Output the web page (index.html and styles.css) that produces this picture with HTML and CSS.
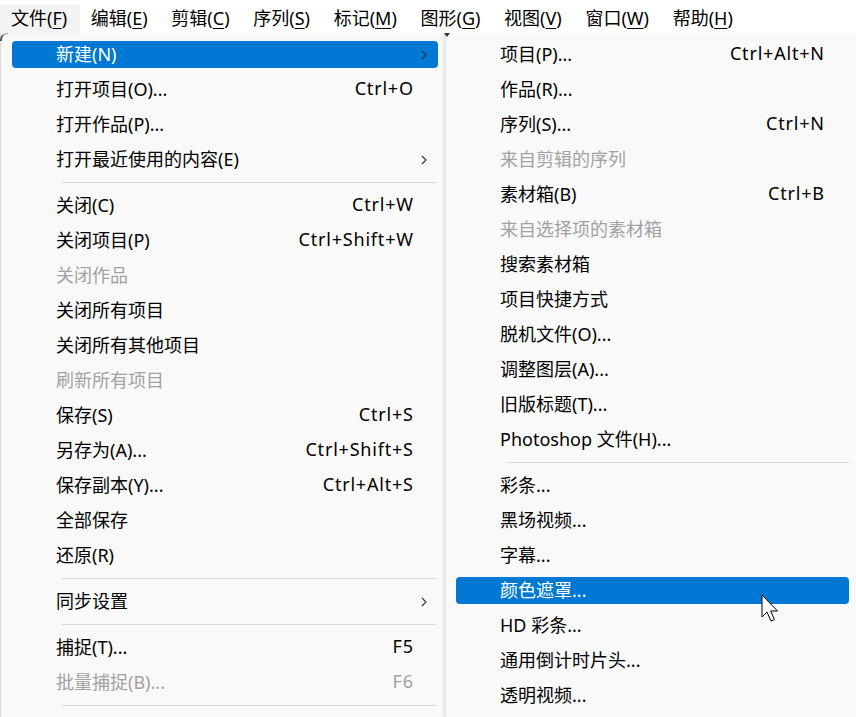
FILE: index.html
```html
<!doctype html>
<html>
<head>
<meta charset="utf-8">
<title>文件菜单</title>
<link rel="stylesheet" href="styles.css">
</head>
<body>
<div class="menubar">
  <div class="top open">文件(<u>F</u>)</div>
  <div class="top">编辑(<u>E</u>)</div>
  <div class="top">剪辑(<u>C</u>)</div>
  <div class="top">序列(<u>S</u>)</div>
  <div class="top">标记(<u>M</u>)</div>
  <div class="top">图形(<u>G</u>)</div>
  <div class="top">视图(<u>V</u>)</div>
  <div class="top">窗口(<u>W</u>)</div>
  <div class="top">帮助(<u>H</u>)</div>
</div>

<div class="menus">
  <div class="menu filemenu">
    <div class="item active"><div class="hl"><span class="label">新建(N)</span><svg class="arrow" viewBox="0 0 6 10"><path d="M1 1l4 4-4 4"/></svg></div></div>
    <div class="item"><div class="hl"><span class="label">打开项目(O)...</span><span class="key">Ctrl+O</span></div></div>
    <div class="item"><div class="hl"><span class="label">打开作品(P)...</span></div></div>
    <div class="item"><div class="hl"><span class="label">打开最近使用的内容(E)</span><svg class="arrow" viewBox="0 0 6 10"><path d="M1 1l4 4-4 4"/></svg></div></div>
    <div class="sep"></div>
    <div class="item"><div class="hl"><span class="label">关闭(C)</span><span class="key">Ctrl+W</span></div></div>
    <div class="item"><div class="hl"><span class="label">关闭项目(P)</span><span class="key">Ctrl+Shift+W</span></div></div>
    <div class="item disabled"><div class="hl"><span class="label">关闭作品</span></div></div>
    <div class="item"><div class="hl"><span class="label">关闭所有项目</span></div></div>
    <div class="item"><div class="hl"><span class="label">关闭所有其他项目</span></div></div>
    <div class="item disabled"><div class="hl"><span class="label">刷新所有项目</span></div></div>
    <div class="item"><div class="hl"><span class="label">保存(S)</span><span class="key">Ctrl+S</span></div></div>
    <div class="item"><div class="hl"><span class="label">另存为(A)...</span><span class="key">Ctrl+Shift+S</span></div></div>
    <div class="item"><div class="hl"><span class="label">保存副本(Y)...</span><span class="key">Ctrl+Alt+S</span></div></div>
    <div class="item"><div class="hl"><span class="label">全部保存</span></div></div>
    <div class="item"><div class="hl"><span class="label">还原(R)</span></div></div>
    <div class="sep"></div>
    <div class="item"><div class="hl"><span class="label">同步设置</span><svg class="arrow" viewBox="0 0 6 10"><path d="M1 1l4 4-4 4"/></svg></div></div>
    <div class="sep"></div>
    <div class="item"><div class="hl"><span class="label">捕捉(T)...</span><span class="key">F5</span></div></div>
    <div class="item disabled"><div class="hl"><span class="label">批量捕捉(B)...</span><span class="key">F6</span></div></div>
    <div class="sep"></div>
  </div>

  <div class="menu submenu">
    <div class="item"><div class="hl"><span class="label">项目(P)...</span><span class="key">Ctrl+Alt+N</span></div></div>
    <div class="item"><div class="hl"><span class="label">作品(R)...</span></div></div>
    <div class="item"><div class="hl"><span class="label">序列(S)...</span><span class="key">Ctrl+N</span></div></div>
    <div class="item disabled"><div class="hl"><span class="label">来自剪辑的序列</span></div></div>
    <div class="item"><div class="hl"><span class="label">素材箱(B)</span><span class="key">Ctrl+B</span></div></div>
    <div class="item disabled"><div class="hl"><span class="label">来自选择项的素材箱</span></div></div>
    <div class="item"><div class="hl"><span class="label">搜索素材箱</span></div></div>
    <div class="item"><div class="hl"><span class="label">项目快捷方式</span></div></div>
    <div class="item"><div class="hl"><span class="label">脱机文件(O)...</span></div></div>
    <div class="item"><div class="hl"><span class="label">调整图层(A)...</span></div></div>
    <div class="item"><div class="hl"><span class="label">旧版标题(T)...</span></div></div>
    <div class="item"><div class="hl"><span class="label">Photoshop 文件(H)...</span></div></div>
    <div class="sep"></div>
    <div class="item"><div class="hl"><span class="label">彩条...</span></div></div>
    <div class="item"><div class="hl"><span class="label">黑场视频...</span></div></div>
    <div class="item"><div class="hl"><span class="label">字幕...</span></div></div>
    <div class="item active"><div class="hl"><span class="label">颜色遮罩...</span></div></div>
    <div class="item"><div class="hl"><span class="label">HD 彩条...</span></div></div>
    <div class="item"><div class="hl"><span class="label">通用倒计时片头...</span></div></div>
    <div class="item"><div class="hl"><span class="label">透明视频...</span></div></div>
  </div>
</div>

<svg class="cursor" width="19" height="28" viewBox="0 0 19 28">
  <path d="M1 1V23L6 18L10 27L13.5 25.6L9.6 17H16.5Z" fill="#fff" stroke="#000" stroke-width="1" stroke-linejoin="round"/>
</svg>
</body>
</html>
```

FILE: styles.css
```css
html, body {
  margin: 0;
  padding: 0;
}

body {
  width: 856px;
  height: 717px;
  overflow: hidden;
  position: relative;
  background: #fff;
  font-family: "Noto Sans", "Noto Sans CJK SC", sans-serif;
  font-size: 18px;
  color: #000;
}

/* top menu bar */
.menubar {
  display: flex;
  height: 33px;
  background: #fff;
}
.menubar .top {
  height: 28px;
  margin-top: 5px;
  padding: 0 12.7px 0 11px;
  box-sizing: border-box;
  line-height: 26px;
  white-space: nowrap;
}
.menubar .top.open {
  background: #f3f3f3;
}
.menubar u {
  text-decoration-thickness: 1px;
  text-underline-offset: 3px;
}

/* dropdowns */
.menus {
  display: flex;
  width: 856px;
  height: 684px;
  overflow: hidden;
}
.menu {
  flex: 0 0 auto;
  box-sizing: border-box;
  padding-top: 4px;
  background: #f9f9f9;
  position: relative;
}
.filemenu {
  width: 445px;
  padding-left: 11px;
  padding-right: 7px;
  border-left: 1px solid #dcdcdc;
}
.filemenu::before {
  content: "";
  position: absolute;
  left: -1px;
  top: 0;
  width: 8px;
  height: 8px;
  border-left: 2px solid #555;
  border-top: 1px solid #999;
  border-top-left-radius: 7px;
  box-sizing: border-box;
}
.submenu {
  width: 415px;
  padding-left: 10px;
  padding-right: 11px;
  border-left: 1px solid #e4e4e4;
  box-shadow: -2px 0 3px rgba(0,0,0,.08);
}
.submenu::before {
  content: "";
  position: absolute;
  left: -2px;
  top: 0;
  border-top: 4px solid #333;
  border-left: 3px solid transparent;
  border-right: 3px solid transparent;
}

.item {
  height: 35px;
  padding: 4px 0;
  box-sizing: border-box;
}
.item .hl {
  height: 27px;
  box-sizing: border-box;
  display: flex;
  align-items: center;
  padding: 0 25px 4px 44px;
  border-radius: 4px;
  white-space: nowrap;
}
.item .label {
  flex: 1;
}
.item .key {
  letter-spacing: 0.8px;
  margin-right: -0.8px;
}
.item .arrow {
  width: 6px;
  height: 10px;
  margin: 4px -14px 0 0;
  fill: none;
  stroke: #333;
  stroke-width: 1.1;
}
.item.active .hl {
  background: #0078d4;
  color: #fff;
}
.item.active .arrow {
  stroke: #1d2b38;
}
.item.disabled {
  color: #a2a2a2;
}

.sep {
  height: 11px;
  position: relative;
}
.filemenu .sep::after,
.submenu .sep::after {
  content: "";
  position: absolute;
  left: 50px;
  right: 1px;
  top: 5px;
  height: 1px;
  background: #d9d9d9;
}
.submenu .sep::after {
  right: 0;
}

.cursor {
  position: absolute;
  left: 761px;
  top: 594px;
}
```
